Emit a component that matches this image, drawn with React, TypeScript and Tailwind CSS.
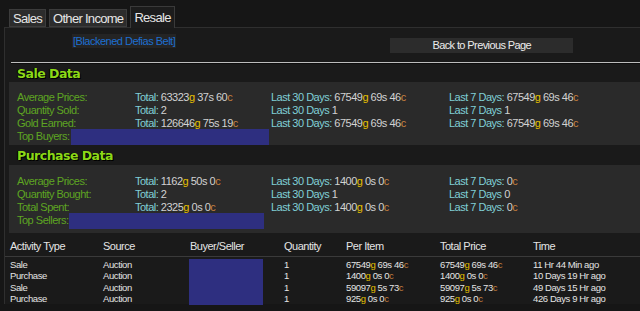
import React from "react";

type Row = { label: string; total?: string; d30?: string; d7?: string };

const saleRows: Row[] = [
  { label: "Average Prices:", total: "Total: 63323g 37s 60c", d30: "Last 30 Days: 67549g 69s 46c", d7: "Last 7 Days: 67549g 69s 46c" },
  { label: "Quantity Sold:", total: "Total: 2", d30: "Last 30 Days 1", d7: "Last 7 Days 1" },
  { label: "Gold Earned:", total: "Total: 126646g 75s 19c", d30: "Last 30 Days: 67549g 69s 46c", d7: "Last 7 Days: 67549g 69s 46c" },
];

const purchaseRows: Row[] = [
  { label: "Average Prices:", total: "Total: 1162g 50s 0c", d30: "Last 30 Days: 1400g 0s 0c", d7: "Last 7 Days: 0c" },
  { label: "Quantity Bought:", total: "Total: 2", d30: "Last 30 Days 1", d7: "Last 7 Days 0" },
  { label: "Total Spent:", total: "Total: 2325g 0s 0c", d30: "Last 30 Days: 1400g 0s 0c", d7: "Last 7 Days: 0c" },
];

const activity = [
  { type: "Sale", source: "Auction", qty: "1", per: "67549g 69s 46c", total: "67549g 69s 46c", time: "11 Hr 44 Min ago" },
  { type: "Purchase", source: "Auction", qty: "1", per: "1400g 0s 0c", total: "1400g 0s 0c", time: "10 Days 19 Hr ago" },
  { type: "Sale", source: "Auction", qty: "1", per: "59097g 5s 73c", total: "59097g 5s 73c", time: "49 Days 15 Hr ago" },
  { type: "Purchase", source: "Auction", qty: "1", per: "925g 0s 0c", total: "925g 0s 0c", time: "426 Days 9 Hr ago" },
];

// colour the g / c suffixes of a money string
function Money({ text }: { text: string }) {
  const parts = text.split(" ");
  return (
    <>
      {parts.map((p, i) => {
        const m = p.match(/^(\d+)([gc])$/);
        const sep = i < parts.length - 1 ? " " : "";
        if (!m) return <span key={i}>{p + sep}</span>;
        return (
          <span key={i}>
            {m[1]}
            <span className={m[2] === "g" ? "text-[#e6c000]" : "text-[#c8803f]"}>{m[2]}</span>
            {sep}
          </span>
        );
      })}
    </>
  );
}

// "Total: 123g" -> cyan prefix + grey value
function Stat({ text }: { text?: string }) {
  if (!text) return <span />;
  const m = text.match(/^(Total:|Last 30 Days:?|Last 7 Days:?)\s(.*)$/);
  if (!m) return <span>{text}</span>;
  return (
    <span className="whitespace-nowrap">
      <span className="text-[#80cfd6]">{m[1]} </span>
      <span className="text-[#d2d2d2]">
        <Money text={m[2]} />
      </span>
    </span>
  );
}

function DataBox({ title, rows, topLabel, boxW, headH, pt, pb }: {
  title: string; rows: Row[]; topLabel: string; boxW: string; headH: string; pt: string; pb: string;
}) {
  return (
    <div>
      <div className={`${headH} flex items-center pl-[12px] font-['DejaVu_Sans',sans-serif] font-bold text-[12.5px] tracking-[-0.5px] text-[#8cd817] [text-shadow:1px_1px_0_#000,-1px_0_0_#000]`}>
        {title}
      </div>
      <div className={`ml-[4px] bg-[#2a2a2a] pl-[8px] ${pt} ${pb}`}>
        {rows.map((r) => (
          <div key={r.label} className="grid grid-cols-[118px_136px_178px_1fr] h-[13px] items-center">
            <span className="text-[#5ea522]">{r.label}</span>
            <Stat text={r.total} />
            <Stat text={r.d30} />
            <Stat text={r.d7} />
          </div>
        ))}
        <div className="flex h-[13px] items-center">
          <span className="text-[#5ea522]">{topLabel}</span>
          <span className={`h-[16px] ml-[1px] bg-[#2e2f80] ${boxW}`} />
        </div>
      </div>
    </div>
  );
}

export default function App() {
  return (
    <div className="w-[640px] h-[311px] overflow-hidden bg-[#161616] font-['Liberation_Sans',Arial,sans-serif] text-[11px] tracking-[-0.5px] leading-[13px]">
      {/* tabs */}
      <div className="flex items-end gap-[3px] pl-[9px] h-[27px]">
        <div className="h-[18px] px-[3px] flex items-center border border-[#3c3c3c] bg-[#2c2c2c] text-[#e6e6e6] text-[13px] tracking-[-0.7px]">Sales</div>
        <div className="h-[18px] px-[3px] flex items-center border border-[#3c3c3c] bg-[#2c2c2c] text-[#e6e6e6] text-[13px] tracking-[-0.7px]">Other Income</div>
        <div className="h-[22px] px-[3px] -mb-px flex items-center border border-b-0 border-[#3a3a3a] bg-[#1c1c1c] text-[#e6e6e6] text-[13px] tracking-[-0.7px] relative z-10">Resale</div>
      </div>

      {/* panel */}
      <div className="ml-[4px] border-l border-t border-[#2f2f2f] bg-[#1a1a1a]">
        <div className="h-[34px] flex">
          <span className="ml-[67px] mt-[6px] h-[14px] px-[1px] bg-[#242424] text-[#1d6fd1] leading-[14px]">[Blackened Defias Belt]</span>
          <button className="ml-[214px] mt-[10px] w-[183px] h-[15px] bg-[#2c2c2c] text-[#ececec] leading-[15px] tracking-[-0.6px]">
            Back to Previous Page
          </button>
        </div>
        <div className="ml-[6px] h-px bg-[#bdbdbd]" />
        <div className="ml-[6px] h-px bg-[#0d0d0d]" />

        <DataBox title="Sale Data" rows={saleRows} topLabel="Top Buyers:" boxW="w-[198px]" headH="h-[18px]" pt="pt-[9px]" pb="pb-[2px]" />
        <DataBox title="Purchase Data" rows={purchaseRows} topLabel="Top Sellers:" boxW="w-[195px]" headH="h-[20px]" pt="pt-[10px]" pb="pb-[6px]" />

        {/* activity table */}
        <div className="pt-[5px] text-[#e4e4e4]">
          <div className="grid grid-cols-[93px_87px_94px_62px_94px_93px_1fr] pl-[5px] h-[16px] items-center">
            <span>Activity Type</span>
            <span>Source</span>
            <span>Buyer/Seller</span>
            <span>Quantity</span>
            <span>Per Item</span>
            <span>Total Price</span>
            <span>Time</span>
          </div>
          <div className="h-px bg-[#3a3a3a] mt-[2px]" />
          <div className="relative pt-[2px] text-[9.5px] tracking-[-0.4px] leading-[11.3px]">
            {activity.map((a, i) => (
              <div key={i} className="grid grid-cols-[93px_87px_94px_62px_94px_93px_1fr] pl-[5px]">
                <span>{a.type}</span>
                <span>{a.source}</span>
                <span />
                <span>{a.qty}</span>
                <span><Money text={a.per} /></span>
                <span><Money text={a.total} /></span>
                <span>{a.time}</span>
              </div>
            ))}
            <div className="absolute left-[184px] top-[2px] w-[74px] h-[46px] bg-[#2e2f80]" />
          </div>
        </div>
      </div>
    </div>
  );
}
